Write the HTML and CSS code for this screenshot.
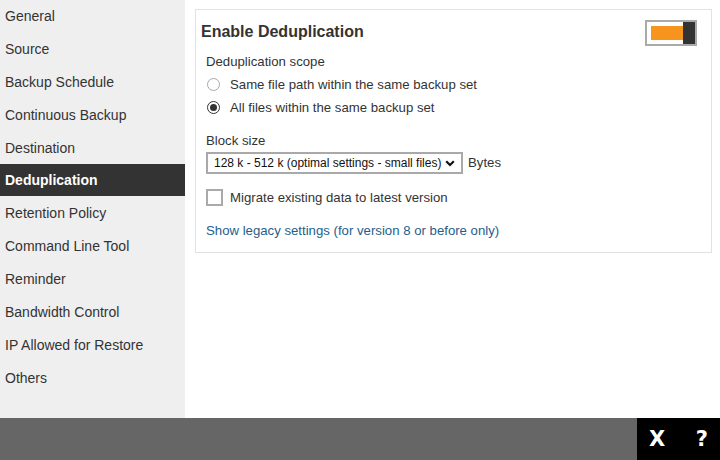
FILE: index.html
```html
<!DOCTYPE html>
<html>
<head>
<meta charset="utf-8">
<link rel="stylesheet" href="styles.css">
</head>
<body>
<div class="app">
  <div class="top">
    <nav class="sidebar">
      <div class="nav-item">General</div>
      <div class="nav-item">Source</div>
      <div class="nav-item">Backup Schedule</div>
      <div class="nav-item">Continuous Backup</div>
      <div class="nav-item">Destination</div>
      <div class="nav-item active">Deduplication</div>
      <div class="nav-item">Retention Policy</div>
      <div class="nav-item">Command Line Tool</div>
      <div class="nav-item">Reminder</div>
      <div class="nav-item">Bandwidth Control</div>
      <div class="nav-item">IP Allowed for Restore</div>
      <div class="nav-item">Others</div>
    </nav>
    <main class="main">
      <section class="card">
        <div class="card-head">
          <h1 class="title">Enable Deduplication</h1>
          <div class="toggle"><span class="toggle-bar"></span><span class="toggle-knob"></span></div>
        </div>
        <div class="card-body">
          <div class="row">Deduplication scope</div>
          <div class="row opt"><span class="radio"></span>Same file path within the same backup set</div>
          <div class="row opt"><span class="radio checked"></span>All files within the same backup set</div>
          <div class="row label-gap">Block size</div>
          <div class="select-row">
            <div class="select">
              <span>128 k - 512 k (optimal settings - small files)</span>
              <svg class="chev" width="10" height="7" viewBox="0 0 10 7"><path d="M1.2 1.3 L5 5 L8.8 1.3" fill="none" stroke="#111" stroke-width="2.2"/></svg>
            </div>
            <span class="unit">Bytes</span>
          </div>
          <div class="row check-row"><span class="checkbox"></span>Migrate existing data to latest version</div>
          <div class="row link-row"><a class="link">Show legacy settings (for version 8 or before only)</a></div>
        </div>
      </section>
    </main>
  </div>
  <footer class="footer">
    <div class="actions"><span class="act">X</span><span class="act">?</span></div>
  </footer>
</div>
</body>
</html>
```

FILE: styles.css
```css
html, body {
  margin: 0;
  padding: 0;
}
body {
  font-family: "Liberation Sans", Arial, sans-serif;
  font-size: 14px;
  color: #333;
  background: #fff;
}
.app {
  width: 720px;
  height: 460px;
  display: flex;
  flex-direction: column;
  overflow: hidden;
}
.top {
  flex: 1;
  display: flex;
  min-height: 0;
}
.sidebar {
  width: 185px;
  background: #efefef;
  display: flex;
  flex-direction: column;
}
.nav-item {
  flex: none;
  height: 33px;
  line-height: 33px;
  padding-left: 5px;
  color: #333;
  white-space: nowrap;
}
.nav-item.active {
  margin-top: -1px;
  margin-bottom: 1px;
  height: 32px;
  line-height: 32px;
  background: #333;
  color: #fff;
  font-weight: bold;
}
.main {
  flex: 1;
  padding: 9px 8px 0 10px;
}
.card {
  border: 1px solid #e2e2e2;
  padding: 0 0 10px 0;
}
.card-head {
  display: flex;
  justify-content: space-between;
  align-items: flex-start;
  padding: 10px 14px 0 5px;
}
.title {
  margin: 0;
  font-size: 16px;
  line-height: 23px;
  font-weight: bold;
  color: #333;
}
.toggle {
  width: 48px;
  height: 22px;
  border: 2px solid #aaa;
  background: #fff;
  display: flex;
  align-items: center;
  justify-content: flex-end;
}
.toggle-bar {
  width: 32px;
  height: 14px;
  background: #f7941d;
}
.toggle-knob {
  width: 12px;
  height: 22px;
  background: #333;
}
.card-body {
  padding: 4px 0 0 10px;
  font-size: 13.2px;
}
.row {
  height: 23px;
  line-height: 23px;
  display: flex;
  align-items: center;
  white-space: nowrap;
}
.opt {
  padding-left: 1px;
}
.radio {
  width: 11px;
  height: 11px;
  border: 1px solid #a8a8a8;
  border-radius: 50%;
  margin-right: 10px;
  display: flex;
  align-items: center;
  justify-content: center;
  box-sizing: content-box;
}
.radio.checked {
  border: 1px solid #333;
}
.radio.checked::after {
  content: "";
  width: 7px;
  height: 7px;
  border-radius: 50%;
  background: #333;
}
.label-gap {
  margin-top: 10px;
}
.select-row {
  display: flex;
  align-items: center;
  height: 22px;
}
.select {
  width: 257px;
  height: 22px;
  box-sizing: border-box;
  border: 2px solid #a9a9a9;
  display: flex;
  align-items: center;
  justify-content: space-between;
  padding: 0 6px 0 6px;
  font-size: 12px;
  color: #111;
}
.chev {
  display: block;
}
.unit {
  margin-left: 5px;
  position: relative;
  top: -1px;
}
.check-row {
  margin-top: 12px;
}
.checkbox {
  width: 17px;
  height: 17px;
  box-sizing: border-box;
  border: 2px solid #aaa;
  margin-right: 7px;
}
.link-row {
  margin-top: 10px;
}
.link {
  color: #1f5e8c;
  text-decoration: none;
}
.footer {
  height: 42px;
  background: #666;
  display: flex;
  justify-content: flex-end;
}
.actions {
  width: 83px;
  background: #000;
  display: flex;
  align-items: center;
  justify-content: space-between;
  padding: 0 12px 0 12px;
  box-sizing: border-box;
}
.act {
  color: #fff;
  font-family: "DejaVu Sans", sans-serif;
  font-weight: bold;
  font-size: 21px;
  line-height: 42px;
}
```
